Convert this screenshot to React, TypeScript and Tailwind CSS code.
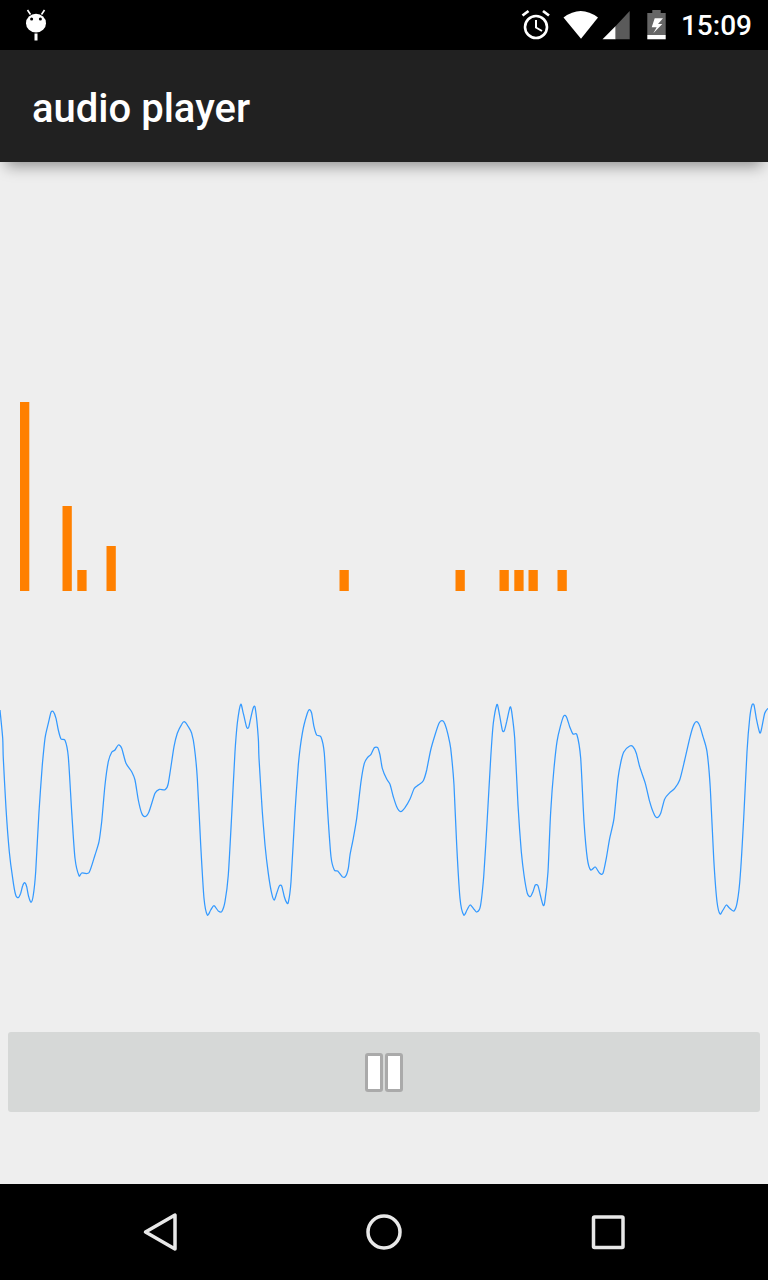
const z1 = [[0,45],[8,130],[10,190],[18,340],[28,470],[38,550],[47,600],[55,608],[62,595],[68,572],[74,563],[80,575],[86,605],[93,622],[100,600],[107,530],[117,350],[127,210],[135,130],[145,85],[153,52],[160,50],[168,70],[175,105],[183,132],[195,136],[205,185],[215,350],[225,490],[237,542],[245,534],[267,533],[285,480],[297,440],[305,380],[315,270],[325,200],[335,172],[345,165],[355,150],[365,160],[378,205],[395,230],[405,255],[415,315],[425,355],[435,365],[447,350],[465,295],[478,283],[495,284],[505,265],[522,155],[532,115],[545,88],[553,80],[565,95],[575,115],[583,155],[592,250],[602,450],[612,610],[622,660],[632,645],[642,632],[655,648],[665,650],[675,620],[685,540],[695,360],[705,170],[712,85],[722,28],[730,55],[740,97],[746,97],[752,70],[760,38],[766,40],[775,130]];
const z2 = [[12,190],[22,350],[30,450],[40,535],[50,595],[58,615],[65,595],[73,573],[80,573],[88,605],[95,623],[100,622],[108,560],[120,350],[130,210],[138,140],[147,90],[157,55],[163,44],[170,55],[177,95],[185,120],[198,126],[208,175],[218,350],[228,485],[238,525],[248,528],[262,545],[271,545],[280,520],[285,480],[295,430],[305,370],[318,260],[328,205],[338,187],[348,178],[358,158],[368,158],[375,180],[382,220],[395,252],[405,268],[415,305],[425,335],[437,350],[450,338],[465,312],[478,280],[490,270],[505,257],[515,225],[527,165],[540,120],[552,85],[562,77],[570,88],[578,115],[587,160],[597,270],[605,450],[615,610],[626,660],[636,645],[645,630],[655,640],[665,651],[676,635],[686,545],[697,370],[707,190],[715,85],[725,30],[730,40],[742,105],[748,107],[755,80],[765,37],[770,50]];
const z3 = [[20,130],[30,330],[40,470],[48,540],[58,595],[67,605],[75,590],[82,570],[90,572],[97,600],[105,630],[110,622],[120,530],[128,350],[138,220],[147,140],[157,95],[167,63],[175,65],[185,95],[195,117],[207,120],[218,190],[228,380],[238,490],[248,525],[262,516],[275,535],[285,535],[295,490],[305,430],[318,370],[330,250],[340,195],[348,170],[365,153],[375,155],[385,175],[395,215],[412,265],[425,320],[437,355],[447,368],[458,355],[470,312],[485,293],[500,280],[515,255],[530,195],[545,130],[555,95],[565,80],[575,92],[585,125],[597,170],[607,280],[617,490],[627,620],[636,657],[645,645],[655,630],[665,640],[678,648],[688,620],[697,540],[707,370],[717,170],[725,70],[732,30],[738,30],[745,70],[755,113],[760,105],[770,55],[780,40]];

const pts = [
  ...z1.map(([x, y]) => [x / 3, y / 3]),
  ...z2.map(([x, y]) => [255 + x / 3, y / 3]),
  ...z3.map(([x, y]) => [508 + x / 3, y / 3]),
];

function smoothPath(p: number[][]) {
  let d = `M${p[0][0].toFixed(1)} ${p[0][1].toFixed(1)}`;
  for (let i = 0; i < p.length - 1; i++) {
    const a = p[Math.max(i - 1, 0)];
    const b = p[i];
    const c = p[i + 1];
    const e = p[Math.min(i + 2, p.length - 1)];
    const k = 0.12;
    d += ` C${(b[0] + (c[0] - a[0]) * k).toFixed(1)} ${(b[1] + (c[1] - a[1]) * k).toFixed(1)} ${(c[0] - (e[0] - b[0]) * k).toFixed(1)} ${(c[1] - (e[1] - b[1]) * k).toFixed(1)} ${c[0].toFixed(1)} ${c[1].toFixed(1)}`;
  }
  return d;
}
const wave = smoothPath(pts);

const bars = [
  [20, 189], [62.5, 85], [77.3, 21], [106.5, 45], [339.5, 21], [455.5, 21],
  [499.5, 21], [514.3, 21], [528.5, 21], [557.5, 21],
];

function StatusIcons() {
  return (
    <svg width="160" height="50" viewBox="515 0 160 50" className="block">
      <g fill="none" stroke="#fff" strokeWidth="2.6">
        <circle cx="537" cy="27" r="11" />
        <path d="M523.5 15.5 L529.5 11 M550 15.5 L544 11" strokeWidth="2.8" />
        <path d="M537 20 V27.5 L543 31" strokeWidth="2" />
      </g>
      <path d="M582 38.7 L564.5 17.5 Q581.7 4.5 599 17.5 Z" fill="#fff" />
      <path d="M603.5 39.3 L616.7 26 V39.3 Z" fill="#fff" />
      <path d="M616.7 26 L630.7 11 V39.3 H616.7 Z" fill="#5a5a5a" />
      <path d="M653.3 10 H661.7 V13 H666.7 V35 H648.3 V13 H653.3 Z" fill="#666" />
      <rect x="648.3" y="35" width="18.4" height="4.3" fill="#fff" />
      <path d="M655.7 18.3 H664 L659 24 H663.3 L654.3 33.3 L657.7 27.3 H652.7 Z" fill="#fff" />
    </svg>
  );
}

export default function App() {
  return (
    <div className="flex h-[1280px] w-[768px] flex-col overflow-hidden bg-[#eeeeee] font-['Roboto',sans-serif]">
      <header className="flex h-[50px] shrink-0 items-center justify-between bg-black pl-[25px] pr-[16px]">
        <svg width="22" height="34" viewBox="25 8 22 34" className="block">
          <ellipse cx="36" cy="23.2" rx="10" ry="9.4" fill="#fff" />
          <path d="M27.5 10 L30.5 14.5 M44.5 10 L41.5 14.5" stroke="#fff" strokeWidth="1.6" />
          <circle cx="31.6" cy="19" r="1.5" fill="#000" />
          <circle cx="40.4" cy="19" r="1.5" fill="#000" />
          <rect x="34.5" y="33.5" width="3" height="7" fill="#fff" />
        </svg>
        <div className="flex items-center gap-[7px]">
          <StatusIcons />
          <span className="pt-[2px] text-[28px] leading-none font-medium text-white">15:09</span>
        </div>
      </header>

      <div className="relative z-10 flex h-[112px] shrink-0 items-center bg-[#212121] pl-[32px] shadow-[0_10px_14px_-6px_rgba(0,0,0,0.4)]">
        <h1 className="pt-[5px] text-[40px] leading-none font-medium text-white">audio player</h1>
      </div>

      <main className="flex flex-1 flex-col">
        <svg width="768" height="189" viewBox="0 402 768 189" className="mt-[240px] block shrink-0">
          {bars.map(([x, h]) => (
            <rect key={x} x={x} y={591 - h} width="9.3" height={h} fill="#ff8000" />
          ))}
        </svg>
        <svg width="768" height="225" viewBox="0 0 768 225" className="mt-[104px] block shrink-0">
          <path d={wave} fill="none" stroke="#3399ff" strokeWidth="1.25" strokeLinejoin="round" />
        </svg>
        <div className="px-2 pt-[112px]">
          <button className="flex h-20 w-full items-center justify-center gap-[2px] rounded-[3px] bg-[#d6d8d7]">
            <span className="h-[39px] w-[18px] rounded-[3px] border-[3px] border-[#aaaaaa] bg-white" />
            <span className="h-[39px] w-[18px] rounded-[3px] border-[3px] border-[#aaaaaa] bg-white" />
          </button>
        </div>
      </main>

      <nav className="h-24 shrink-0 bg-black">
        <svg width="768" height="96" viewBox="0 1184 768 96" className="block">
          <g fill="none" stroke="#e8e8e8" strokeWidth="3.5" strokeLinejoin="round">
            <path d="M145.5 1232 L175 1215 V1249 Z" />
            <circle cx="384" cy="1232" r="16" />
            <rect x="593.5" y="1217" width="29.5" height="30.5" rx="1" />
          </g>
        </svg>
      </nav>
    </div>
  );
}
